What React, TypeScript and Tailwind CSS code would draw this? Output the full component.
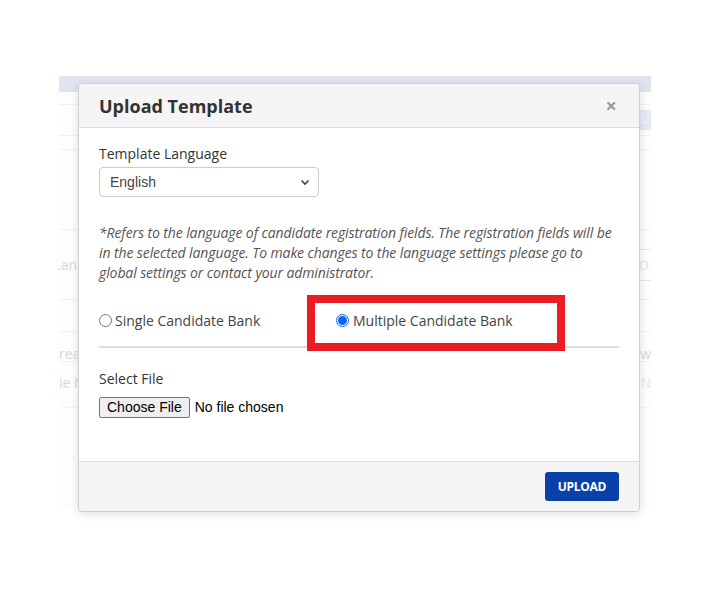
import React from 'react';

const sans = { fontFamily: '"Open Sans", "Noto Sans", sans-serif' };
const arial = { fontFamily: '"Liberation Sans", Arial, sans-serif' };

function BackgroundPage() {
  // faded page that sits behind the modal
  return (
    <div className="ml-[59px] pt-[76px] w-[592px]">
      <div className="h-[16px] bg-[#dfe4ef]" />
      <div className="bg-[#fdfdfd] flex flex-col text-[14px] text-[#d8d8d8]" style={sans}>
        <div className="h-[13px] border-b border-[#f1f1f1]" />
        <div className="h-[31px] border-b border-[#f1f1f1] flex justify-end items-center">
          <div className="w-[11px] h-[20px] bg-[#e3e8f3] text-[#f3f5fa] text-[12px] leading-[20px] pl-[1px] overflow-hidden">U</div>
        </div>
        <div className="h-[14px] border-b border-[#f1f1f1]" />
        <div className="h-[80px] border-b border-[#f1f1f1]" />
        <div className="h-[70px] border-b border-[#f1f1f1] flex items-center justify-between">
          <span className="-ml-[2px]">.an</span>
          <span className="text-[#dfe4f3] border-y border-[#e3e7f3] h-[32px] leading-[30px] w-[12px] overflow-hidden text-[13px]">D</span>
        </div>
        <div className="h-[32px] border-b border-[#f3f3f3]" />
        <div className="h-[30px] border-b border-[#f3f3f3] flex items-end justify-between">
          <span className="leading-[20px] -mb-[3px]">rea</span>
          <span className="leading-[20px] -mb-[3px]">ew</span>
        </div>
        <div className="h-[46px] border-b border-[#f5f5f5] flex items-center justify-between pb-[4px]">
          <span>ie N</span>
          <span className="text-[#dbeaf6]">N</span>
        </div>
        <div className="h-[100px]" />
      </div>
    </div>
  );
}

function Radio({ checked }: { checked?: boolean }) {
  return checked ? (
    <span className="w-[13px] h-[13px] rounded-full border border-[#0b66f0] flex items-center justify-center shrink-0">
      <span className="w-[9px] h-[9px] rounded-full bg-[#0b66f0]" />
    </span>
  ) : (
    <span className="w-[13px] h-[13px] rounded-full border border-[#767676] bg-white shrink-0" />
  );
}

export default function App() {
  return (
    <div className="relative w-[710px] h-[599px] bg-white overflow-hidden">
      <BackgroundPage />

      {/* modal */}
      <div
        className="absolute left-[78px] top-[83px] w-[562px] bg-white border border-[#cfcfcf] rounded-[4px] shadow-[0_2px_10px_rgba(0,0,0,0.12)] text-[#333]"
        style={sans}
      >
        <div className="h-[44px] px-5 flex items-center justify-between bg-[#f5f5f5] border-b border-[#dcdcdc] rounded-t-[4px]">
          <h2 className="text-[18px] font-bold leading-none text-[#333]">Upload Template</h2>
          <span className="text-[20px] font-bold text-[#9a9a9a] leading-none pr-[2px]">×</span>
        </div>

        <div className="px-5 pt-[16px] pb-[43px]">
          <div className="text-[14px] leading-[20px] text-[#333]">Template Language</div>
          <div className="mt-[3px] w-[220px] h-[30px] border border-[#cccccc] rounded-[4px] flex items-center justify-between pl-[10px] pr-[8px]">
            <span className="text-[14px] text-[#444]" style={arial}>English</span>
            <svg width="10" height="10" viewBox="0 0 10 10">
              <path d="M1.5 3.5 L5 7 L8.5 3.5" fill="none" stroke="#444" strokeWidth="1.6" />
            </svg>
          </div>

          <p className="mt-[26px] text-[14px] leading-[20px] italic text-[#555] tracking-[-0.1px]">
            *Refers to the language of candidate registration fields. The registration fields will be in the
            selected language. To make changes to the language settings please go to global settings or
            contact your administrator.
          </p>

          <div className="relative mt-[27px] flex items-center h-[20px] text-[14px] text-[#444]">
            <label className="w-[237px] flex items-center gap-[3px]">
              <Radio />
              <span>Single Candidate Bank</span>
            </label>
            <label className="flex items-center gap-[4px]">
              <Radio checked />
              <span>Multiple Candidate Bank</span>
            </label>
            {/* red annotation box */}
            <div className="absolute left-[208px] top-[-15px] w-[258px] h-[56px] border-[8px] border-[#ec1c24]" />
          </div>

          <div className="mt-[16px] h-[2px] bg-[#dddddd]" />

          <div className="mt-[21px] text-[14px] leading-[20px] text-[#333]">Select File</div>
          <div className="mt-[8px] flex items-center gap-[5px] text-[14px] text-black" style={arial}>
            <span className="h-[21px] px-[7px] flex items-center bg-[#efefef] border border-[#767676] rounded-[2px]">
              Choose File
            </span>
            <span>No file chosen</span>
          </div>
        </div>

        <div className="h-[50px] bg-[#f5f5f5] border-t border-[#dcdcdc] rounded-b-[4px] flex items-center justify-end px-5">
          <button className="h-[29px] w-[74px] bg-[#0a41a9] rounded-[3px] text-white text-[12px] font-bold tracking-[-0.3px]">
            UPLOAD
          </button>
        </div>
      </div>
    </div>
  );
}
